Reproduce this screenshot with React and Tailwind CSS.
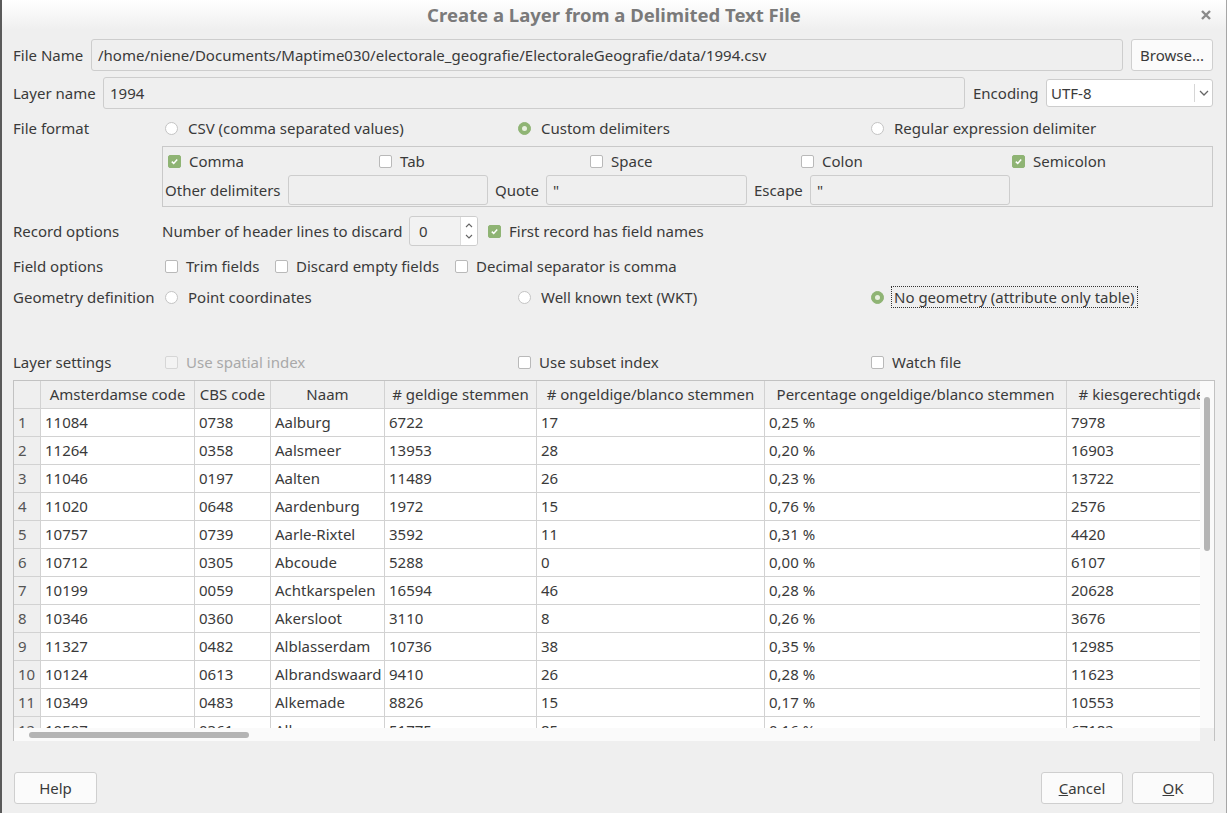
import React from 'react'

const rows = [
  ['1', '11084', '0738', 'Aalburg', '6722', '17', '0,25 %', '7978'],
  ['2', '11264', '0358', 'Aalsmeer', '13953', '28', '0,20 %', '16903'],
  ['3', '11046', '0197', 'Aalten', '11489', '26', '0,23 %', '13722'],
  ['4', '11020', '0648', 'Aardenburg', '1972', '15', '0,76 %', '2576'],
  ['5', '10757', '0739', 'Aarle-Rixtel', '3592', '11', '0,31 %', '4420'],
  ['6', '10712', '0305', 'Abcoude', '5288', '0', '0,00 %', '6107'],
  ['7', '10199', '0059', 'Achtkarspelen', '16594', '46', '0,28 %', '20628'],
  ['8', '10346', '0360', 'Akersloot', '3110', '8', '0,26 %', '3676'],
  ['9', '11327', '0482', 'Alblasserdam', '10736', '38', '0,35 %', '12985'],
  ['10', '10124', '0613', 'Albrandswaard', '9410', '26', '0,28 %', '11623'],
  ['11', '10349', '0483', 'Alkemade', '8826', '15', '0,17 %', '10553'],
  ['12', '10507', '0361', 'Alkmaar', '51775', '85', '0,16 %', '67182'],
]

const columns = [
  { title: 'Amsterdamse code', w: 'w-[154px]' },
  { title: 'CBS code', w: 'w-[76px]' },
  { title: 'Naam', w: 'w-[114px]' },
  { title: '# geldige stemmen', w: 'w-[152px]' },
  { title: '# ongeldige/blanco stemmen', w: 'w-[228px]' },
  { title: 'Percentage ongeldige/blanco stemmen', w: 'w-[302px]' },
  { title: '# kiesgerechtigde', w: 'w-[150px]' },
]

const Checkbox = ({ checked, disabled }) => (
  <span
    className={`flex h-[13px] w-[13px] shrink-0 items-center justify-center rounded-[2px] border ${
      checked
        ? 'border-[#8fb474] bg-[#8fb474]'
        : disabled
          ? 'border-[#d6d6d6] bg-[#f3f3f3]'
          : 'border-[#b9b9b9] bg-white'
    }`}
  >
    {checked && (
      <svg width="9" height="9" viewBox="0 0 9 9">
        <path d="M1.8 4.6 L3.7 6.4 L7.2 2.6" fill="none" stroke="white" strokeWidth="1.5" />
      </svg>
    )}
  </span>
)

const Radio = ({ checked }) => (
  <span
    className={`flex h-[13px] w-[13px] shrink-0 items-center justify-center rounded-full border ${
      checked ? 'border-[#8fb474] bg-[#8fb474]' : 'border-[#c4c4c4] bg-white'
    }`}
  >
    {checked && <span className="h-[5px] w-[5px] rounded-full bg-[#e8f0e0]" />}
  </span>
)

const Check = ({ label, checked, disabled, className = '' }) => (
  <div className={`flex items-center gap-[8px] ${className}`}>
    <Checkbox checked={checked} disabled={disabled} />
    <span className={disabled ? 'text-[#a9a9a9]' : ''}>{label}</span>
  </div>
)

const RadioItem = ({ label, checked, focused }) => (
  <div className="flex w-[353px] items-center gap-[10px]">
    <Radio checked={checked} />
    <span className={focused ? 'border border-dotted border-[#333] px-[2px] leading-[20px] -ml-[3px]' : ''}>{label}</span>
  </div>
)

const TextBox = ({ value, className = '', white }) => (
  <div
    className={`flex h-full items-center rounded-[3px] border border-[#cdcdcd] px-[6px] ${
      white ? 'bg-white' : 'bg-[#efefef]'
    } ${className}`}
  >
    {value}
  </div>
)

const Button = ({ children, className = '' }) => (
  <div
    className={`flex h-[32px] items-center justify-center rounded-[3px] border border-[#cfcfcf] bg-[#fbfbfb] ${className}`}
  >
    {children}
  </div>
)

export default function App() {
  return (
    <div
      className="flex h-[813px] w-[1227px] flex-col overflow-hidden border-l-2 border-r border-l-[#5a5a5a] border-r-[#a6a6a6] bg-[#efefef] text-[15px] text-[#3a3a3a]"
      style={{ fontFamily: '"Noto Sans", "Open Sans", sans-serif' }}
    >
      {/* Title bar */}
      <div className="relative flex h-[30px] shrink-0 items-center justify-center bg-gradient-to-b from-white to-[#efefef]">
        <span className="text-[18.5px] font-bold text-[#7a7a7a]">Create a Layer from a Delimited Text File</span>
        <svg className="absolute right-[15px] top-[10px]" width="10" height="10" viewBox="0 0 10 10">
          <path d="M1 1 L9 9 M9 1 L1 9" stroke="#8a8a8a" strokeWidth="2.4" />
        </svg>
      </div>

      <div className="flex flex-col pl-[11px]">
        {/* File name */}
        <div className="mt-[9px] flex h-[32px] items-center">
          <span className="w-[78px]">File Name</span>
          <TextBox className="w-[1032px]" value="/home/niene/Documents/Maptime030/electorale_geografie/ElectoraleGeografie/data/1994.csv" />
          <Button className="ml-[8px] w-[82px]">Browse...</Button>
        </div>

        {/* Layer name */}
        <div className="mt-[6px] flex h-[32px] items-center">
          <span className="w-[90px]">Layer name</span>
          <TextBox className="w-[862px]" value="1994" />
          <span className="ml-[8px] w-[73px]">Encoding</span>
          <div className="flex h-[28px] w-[167px] items-center rounded-[3px] border border-[#cdcdcd] bg-white pl-[4px]">
            <span className="flex-1">UTF-8</span>
            <div className="flex h-[18px] w-[18px] items-center justify-center border-l border-[#d6d6d6]">
              <svg width="10" height="6" viewBox="0 0 10 6">
                <path d="M1 1 L5 5 L9 1" fill="none" stroke="#666" strokeWidth="1.3" />
              </svg>
            </div>
          </div>
        </div>

        {/* File format */}
        <div className="mt-[7px] flex h-[24px] items-center">
          <span className="w-[152px]">File format</span>
          <RadioItem label="CSV (comma separated values)" />
          <RadioItem label="Custom delimiters" checked />
          <RadioItem label="Regular expression delimiter" />
        </div>

        {/* Delimiter group */}
        <div className="ml-[149px] mt-[6px] flex h-[61px] w-[1051px] flex-col border border-[#c9c9c9] pl-[2px]">
          <div className="flex h-[27px] items-center pt-[1px]">
            <Check className="w-[211px] pl-[3px]" label="Comma" checked />
            <Check className="w-[211px] pl-[3px]" label="Tab" />
            <Check className="w-[211px] pl-[3px]" label="Space" />
            <Check className="w-[211px] pl-[3px]" label="Colon" />
            <Check className="w-[190px] pl-[3px]" label="Semicolon" checked />
          </div>
          <div className="mt-[1px] flex h-[30px] items-center">
            <span className="w-[123px]">Other delimiters</span>
            <TextBox className="w-[200px]" value="" />
            <span className="ml-[7px] w-[51px]">Quote</span>
            <TextBox className="w-[201px]" value={'"'} />
            <span className="ml-[7px] w-[56px]">Escape</span>
            <TextBox className="w-[200px]" value={'"'} />
          </div>
        </div>

        {/* Record options */}
        <div className="mt-[9px] flex h-[30px] items-center">
          <span className="w-[149px]">Record options</span>
          <span className="w-[247px]">Number of header lines to discard</span>
          <div className="flex h-[30px] w-[69px] items-stretch overflow-hidden rounded-[3px] border border-[#cdcdcd] bg-[#f2f2f2]">
            <span className="flex flex-1 items-center pl-[9px]">0</span>
            <div className="flex w-[17px] flex-col items-center justify-center gap-[6px] border-l border-[#dcdcdc] bg-white">
              <svg width="8" height="5" viewBox="0 0 8 5">
                <path d="M1 4 L4 1 L7 4" fill="none" stroke="#666" strokeWidth="1.1" />
              </svg>
              <svg width="8" height="5" viewBox="0 0 8 5">
                <path d="M1 1 L4 4 L7 1" fill="none" stroke="#666" strokeWidth="1.1" />
              </svg>
            </div>
          </div>
          <Check className="ml-[10px]" label="First record has field names" checked />
        </div>

        {/* Field options */}
        <div className="mt-[8px] flex h-[24px] items-center">
          <span className="w-[152px]">Field options</span>
          <Check className="w-[110px]" label="Trim fields" />
          <Check className="w-[180px]" label="Discard empty fields" />
          <Check label="Decimal separator is comma" />
        </div>

        {/* Geometry definition */}
        <div className="mt-[7px] flex h-[24px] items-center">
          <span className="w-[152px]">Geometry definition</span>
          <RadioItem label="Point coordinates" />
          <RadioItem label="Well known text (WKT)" />
          <RadioItem label="No geometry (attribute only table)" checked focused />
        </div>

        {/* Layer settings */}
        <div className="mt-[41px] flex h-[24px] items-center">
          <span className="w-[152px]">Layer settings</span>
          <Check className="w-[353px]" label="Use spatial index" disabled />
          <Check className="w-[353px]" label="Use subset index" />
          <Check label="Watch file" />
        </div>

        {/* Table */}
        <div className="mt-[6px] flex h-[361px] w-[1202px] flex-col border border-b-0 border-[#c2c2c2] bg-white">
          <div className="flex h-[347px]">
            <div className="flex-1 overflow-hidden">
              <div className="flex h-[28px] w-max bg-[#efefef]">
                <div className="w-[27px] shrink-0 border-b border-r border-[#d2d2d2]" />
                {columns.map((c) => (
                  <div
                    key={c.title}
                    className={`${c.w} flex shrink-0 items-center justify-center whitespace-nowrap border-b border-r border-[#d2d2d2]`}
                  >
                    {c.title}
                  </div>
                ))}
              </div>
              {rows.map((r) => (
                <div key={r[0]} className="flex h-[28px] w-max">
                  <div className="flex w-[27px] shrink-0 items-center border-b border-r border-[#d2d2d2] bg-[#efefef] pl-[4px] text-[#555]">
                    {r[0]}
                  </div>
                  {columns.map((c, i) => (
                    <div
                      key={c.title}
                      className={`${c.w} flex shrink-0 items-center whitespace-nowrap border-b border-r border-[#d2d2d2] pl-[4px]`}
                    >
                      {r[i + 1]}
                    </div>
                  ))}
                </div>
              ))}
            </div>
            <div className="flex w-[14px] shrink-0 justify-center bg-[#fafafa] pt-[16px]">
              <div className="h-[154px] w-[6px] rounded-full bg-[#b4b4b4]" />
            </div>
          </div>
          <div className="flex h-[13px]">
            <div className="flex flex-1 items-center bg-[#fafafa] pl-[15px]">
              <div className="h-[6px] w-[220px] rounded-full bg-[#b4b4b4]" />
            </div>
            <div className="w-[14px] bg-[#efefef]" />
          </div>
        </div>

        {/* Buttons */}
        <div className="mt-[31px] flex h-[32px] items-center">
          <Button className="ml-[1px] w-[83px]">Help</Button>
          <div className="flex-1" />
          <Button className="w-[82px]">
            <span><span className="underline">C</span>ancel</span>
          </Button>
          <Button className="ml-[9px] w-[82px]">
            <span><span className="underline">O</span>K</span>
          </Button>
          <div className="w-[12px]" />
        </div>
      </div>
    </div>
  )
}
